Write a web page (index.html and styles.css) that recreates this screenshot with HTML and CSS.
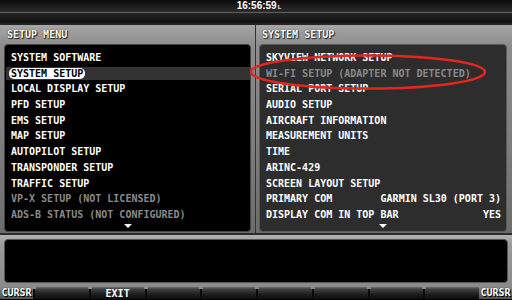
FILE: index.html
```html
<!DOCTYPE html>
<html>

<head>
    <link rel="stylesheet" href="styles.css">
</head>

<body>
    <div class="screen">
        <div class="topbar">
            <span class="clock">16:56:59<small>L</small></span>
        </div>
        <div class="band"></div>

        <div class="panels">
            <section class="panel panel-left">
                <h2 class="panel-title">SETUP MENU</h2>
                <div class="list-box list-black">
                    <ul class="menu">
                        <li>SYSTEM SOFTWARE</li>
                        <li class="selected"><span class="pill">SYSTEM SETUP</span></li>
                        <li>LOCAL DISPLAY SETUP</li>
                        <li>PFD SETUP</li>
                        <li>EMS SETUP</li>
                        <li>MAP SETUP</li>
                        <li>AUTOPILOT SETUP</li>
                        <li>TRANSPONDER SETUP</li>
                        <li>TRAFFIC SETUP</li>
                        <li class="disabled">VP-X SETUP (NOT LICENSED)</li>
                        <li class="disabled">ADS-B STATUS (NOT CONFIGURED)</li>
                    </ul>
                    <div class="more"></div>
                </div>
            </section>

            <section class="panel panel-right">
                <h2 class="panel-title">SYSTEM SETUP</h2>
                <div class="list-box list-grey">
                    <ul class="menu">
                        <li>SKYVIEW NETWORK SETUP</li>
                        <li class="disabled">WI-FI SETUP (ADAPTER NOT DETECTED)</li>
                        <li>SERIAL PORT SETUP</li>
                        <li>AUDIO SETUP</li>
                        <li>AIRCRAFT INFORMATION</li>
                        <li>MEASUREMENT UNITS</li>
                        <li>TIME</li>
                        <li>ARINC-429</li>
                        <li>SCREEN LAYOUT SETUP</li>
                        <li><span>PRIMARY COM</span><span>GARMIN SL30 (PORT 3)</span></li>
                        <li><span>DISPLAY COM IN TOP BAR</span><span>YES</span></li>
                    </ul>
                    <div class="more"></div>
                </div>
            </section>
        </div>

        <div class="message-frame">
            <div class="message-box"></div>
        </div>

        <div class="softkeys">
            <div class="key-label">CURSR</div>
            <div class="key"></div>
            <div class="key">EXIT</div>
            <div class="key"></div>
            <div class="key"></div>
            <div class="key"></div>
            <div class="key"></div>
            <div class="key"></div>
            <div class="key"></div>
            <div class="key-label">CURSR</div>
        </div>

        <!-- annotation drawn over the menu -->
        <svg class="callout" width="512" height="300" viewBox="0 0 512 300">
            <ellipse cx="368" cy="72" rx="117" ry="16.5" fill="none" stroke="#e3261e" stroke-width="2.5" />
        </svg>
    </div>
</body>

</html>
```

FILE: styles.css
```css
body {
    margin: 0;
    padding: 0;
    background-color: #000;
    font-family: "DejaVu Sans Mono", monospace;
}

.screen {
    position: relative;
    width: 512px;
    height: 300px;
    overflow: hidden;
    display: flex;
    flex-direction: column;
    background-color: #000;
}

.topbar {
    height: 12px;
    display: flex;
    justify-content: center;
    align-items: flex-start;
    border-bottom: 1px solid #5e5e5e;
    background: linear-gradient(#0c0c0c, #2c2c2c);
}

.clock {
    margin-left: 6px;
    font-family: "Liberation Sans", Arial, sans-serif;
    font-weight: bold;
    font-size: 10px;
    line-height: 12px;
    color: #fff;
}

.clock small {
    font-size: 6px;
    margin-left: 1px;
}

.band {
    height: 12px;
    background: linear-gradient(#262626, #111 70%, #2a2a2a);
}

.panels {
    display: flex;
    height: 208px;
    border-bottom: 2px solid #2a2a2a;
}

.panel {
    display: flex;
    flex-direction: column;
    background: linear-gradient(#a6a6a6, #8c8c8c 10%, #7c7c7c 60%, #6c6c6c);
}

.panel-left {
    width: 256px;
    padding: 0 4px 1px 4px;
    box-sizing: border-box;
    border-right: 1px solid #333;
}

.panel-right {
    flex: 1;
    padding: 0 5px 1px 3px;
}

.panel-title {
    margin: 0;
    height: 19px;
    padding: 4px 0 0 3px;
    box-sizing: border-box;
    font-size: 10px;
    line-height: 12px;
    font-weight: bold;
    color: #fff;
    text-shadow: 0 0 1px #000, 1px 1px 1px #222;
}

.list-box {
    flex: 1;
    border-radius: 4px;
    padding-top: 5px;
    box-sizing: border-box;
}

.list-black {
    background-color: #000;
    border: 1px solid #444;
}

.list-grey {
    background-color: #2d2d2d;
    border: 1px solid #5a5a5a;
}

.menu {
    list-style: none;
    margin: 0;
    padding: 0;
}

.menu li {
    height: 15.7px;
    line-height: 15.7px;
    padding: 0 5px 0 6px;
    font-size: 10px;
    font-weight: bold;
    color: #fff;
    white-space: nowrap;
    display: flex;
    justify-content: space-between;
}

.menu li.disabled {
    color: #8a8a8a;
}

.menu li.selected {
    height: 13px;
    line-height: 13px;
    margin: 1.35px 0 1.35px 1px;
    padding-left: 3px;
    background-color: #333;
    align-items: center;
}

.pill {
    display: inline-block;
    line-height: 11px;
    padding: 0 2px;
    border-radius: 5px;
    background-color: #fff;
    color: #000;
}

.more {
    width: 0;
    height: 0;
    margin: 1px auto 0;
    border-left: 4px solid transparent;
    border-right: 4px solid transparent;
    border-top: 4px solid #fff;
}

.message-frame {
    height: 52px;
    padding: 4px;
    box-sizing: border-box;
    background: linear-gradient(#b0b0b0, #9a9a9a 20%, #8a8a8a);
}

.message-box {
    height: 100%;
    background-color: #000;
    border: 1px solid #555;
    border-radius: 4px;
    box-sizing: border-box;
}

.softkeys {
    display: flex;
    height: 12px;
    background-color: #000;
}

.key-label {
    width: 33px;
    font-size: 10px;
    line-height: 12px;
    font-weight: bold;
    color: #fff;
    text-align: center;
    background: linear-gradient(#8a8a8a, #4e4e4e);
    text-shadow: 0 0 1px #000, 1px 1px 0 #000;
}

.key {
    position: relative;
    flex: 1;
    border-left: 2px solid #0a0a0a;
    background: linear-gradient(#6a6a6a, #3e3e3e 20%, #1e1e1e 60%, #0c0c0c);
    font-size: 10px;
    line-height: 13px;
    font-weight: bold;
    color: #fff;
    text-align: center;
}

.key::before {
    content: "";
    position: absolute;
    left: -3px;
    top: 0;
    width: 4px;
    height: 2px;
    background-color: #8a8a8a;
}

.callout {
    position: absolute;
    left: 0;
    top: 0;
    pointer-events: none;
}
```
